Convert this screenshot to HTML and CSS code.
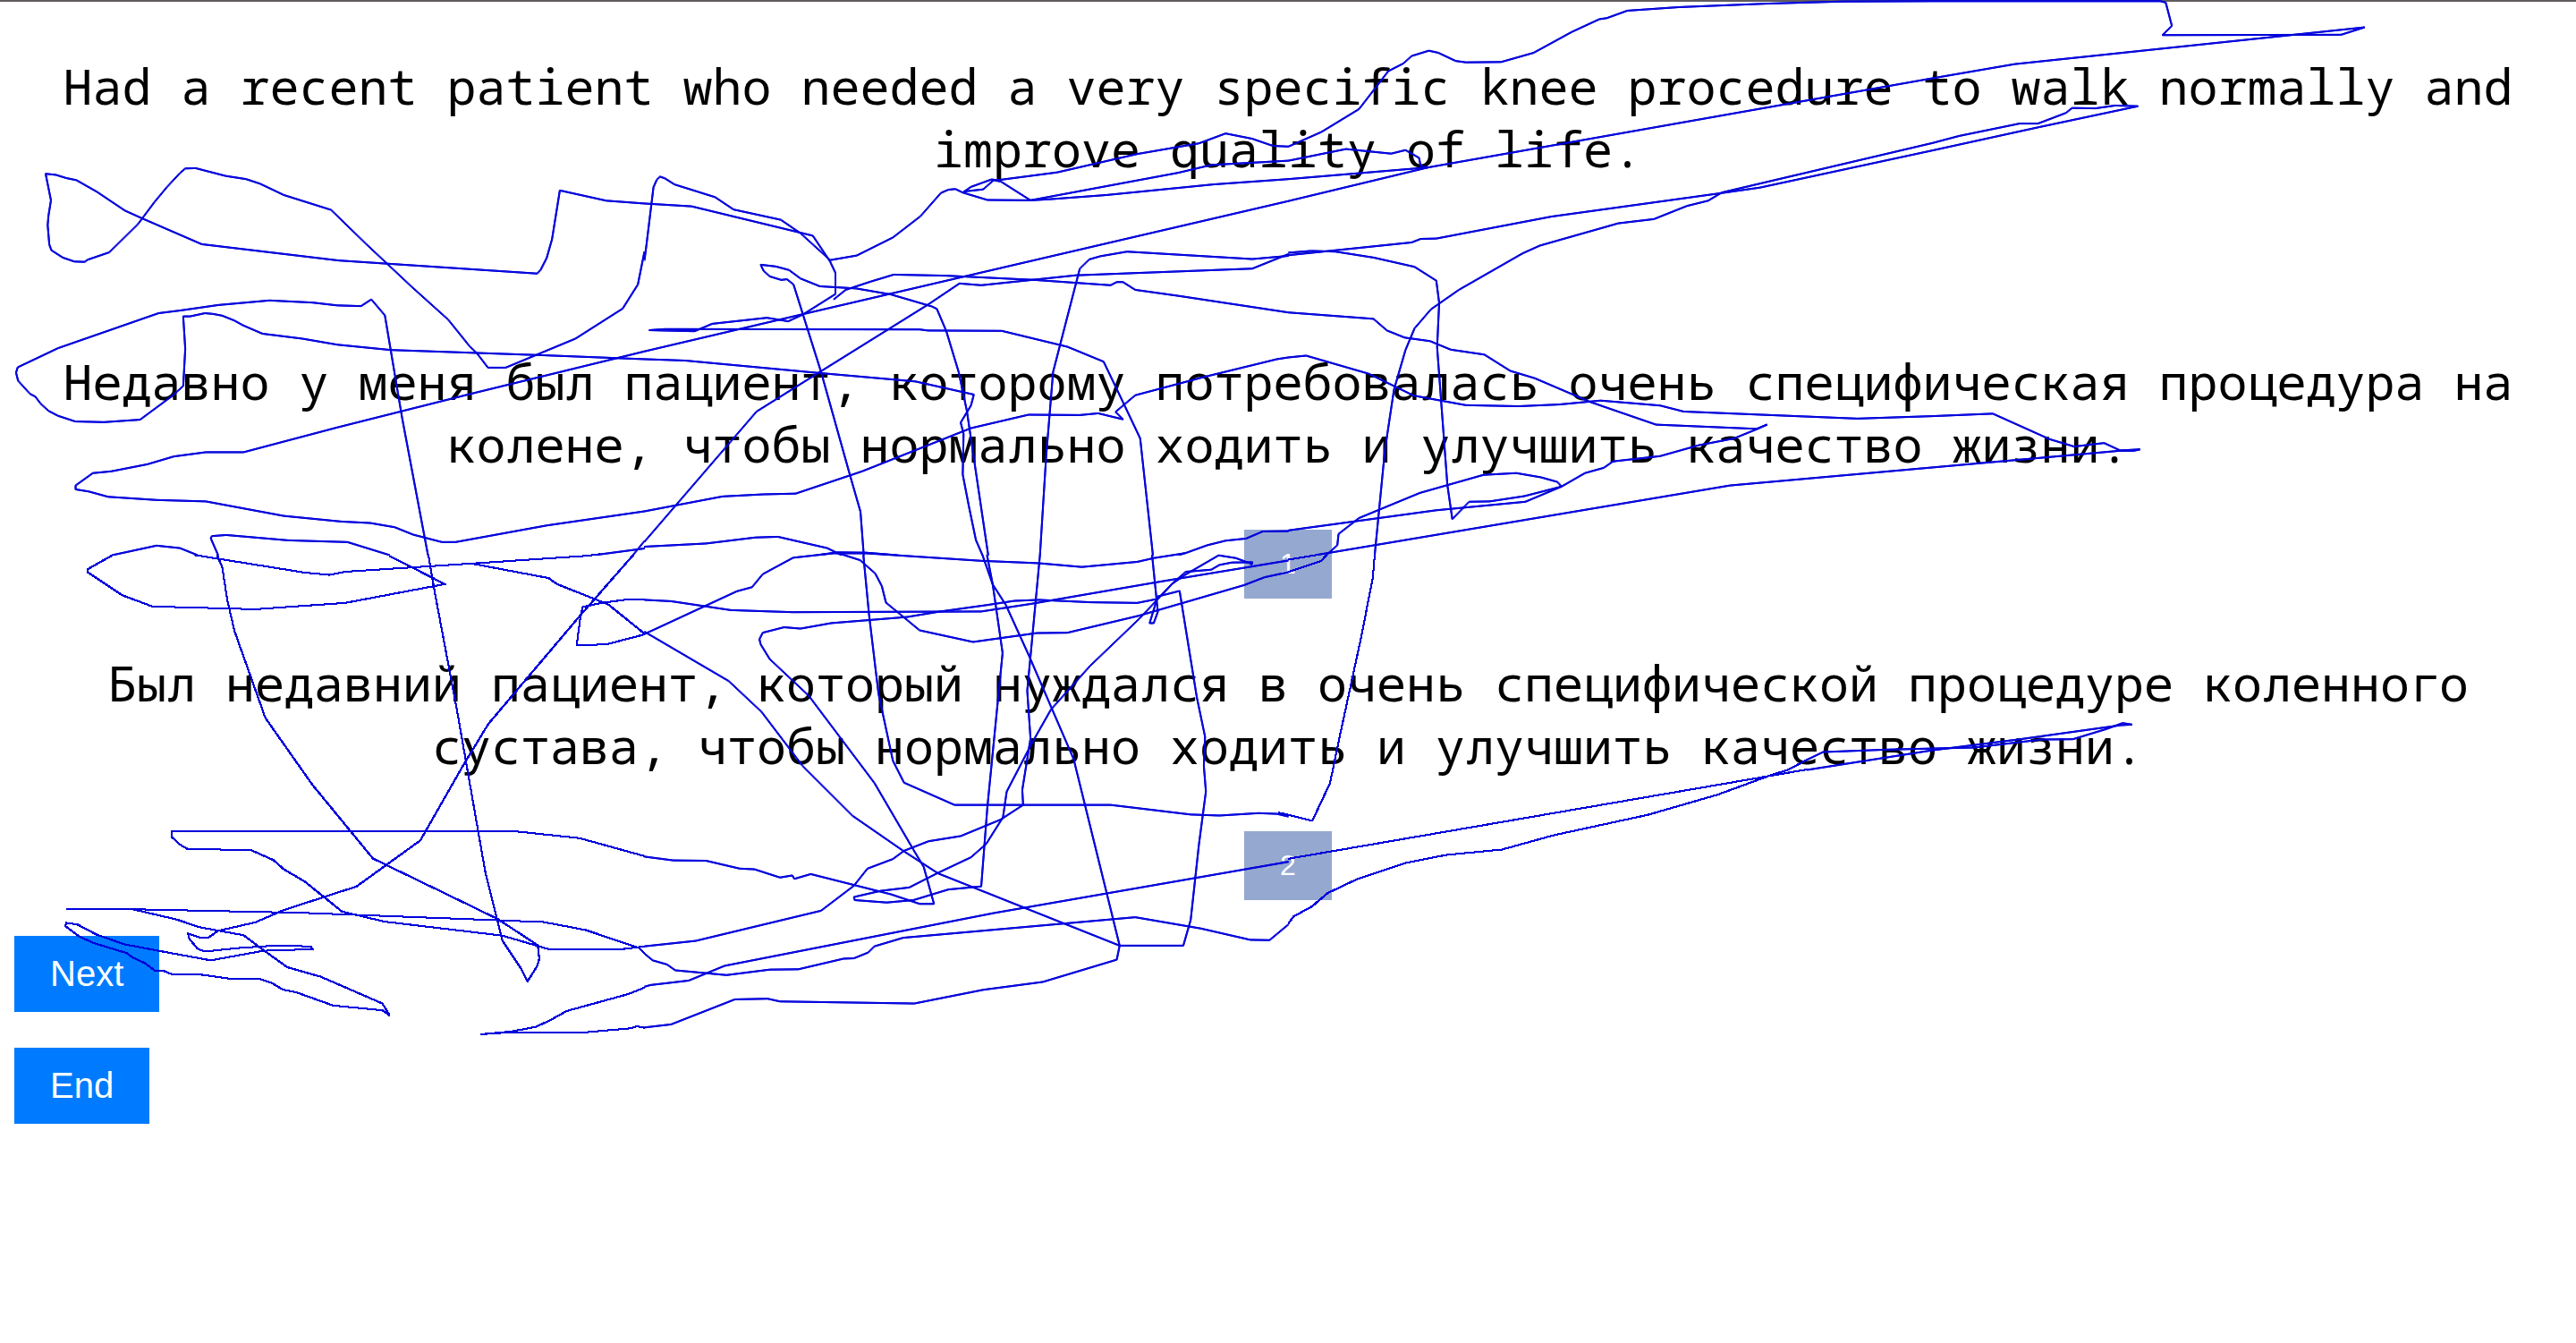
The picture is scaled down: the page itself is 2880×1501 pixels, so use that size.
FILE: index.html
```html
<!DOCTYPE html>
<html lang="ru">
<head>
<meta charset="utf-8">
<title>Translation choice</title>
<link rel="stylesheet" href="styles.css">
</head>
<body>
<main class="page">
  <p class="sentence" lang="en">Had a recent patient who needed a very specific knee procedure to walk normally and improve quality of life.</p>
  <section class="option">
    <p class="sentence">Недавно у меня был пациент, которому потребовалась очень специфическая процедура на колене, чтобы нормально ходить и улучшить качество жизни.</p>
    <button class="choice" type="button">1</button>
  </section>
  <section class="option">
    <p class="sentence">Был недавний пациент, который нуждался в очень специфической процедуре коленного сустава, чтобы нормально ходить и улучшить качество жизни.</p>
    <button class="choice" type="button">2</button>
  </section>
  <div class="actions">
    <button class="action" type="button">Next</button>
    <button class="action" type="button">End</button>
  </div>
</main>

<!-- Pointer trail, stored in tiles -->
<svg class="trail" width="2880" height="1501" viewBox="0 0 2880 1501" aria-hidden="true">
  <svg x="0" y="0" width="720" height="620" viewBox="0 0 1568 1568" preserveAspectRatio="none">
    <path d="M1568,574 1475,566 1362,537 1343,675 1330,728 1315,762 1307,772 1085,755 823,735 490,689 345,616 303,594 235,541 185,508 160,502 135,493 110,490 123,565 117,608 115,635 119,690 124,706 152,727 180,738 205,739 212,733 265,712 335,632 375,570 405,528 437,488 450,475 475,474 548,496 598,505 632,518 690,550 805,592 890,688 1000,808 1090,902 1142,977 1160,997 1187,1038 1230,1038 1400,956 1515,871 1552,803 1568,710"/>
    <path d="M1568,1014 1325,1003 950,988 820,973 735,956 638,942 590,918 570,905 540,891 517,886 498,884 462,893 445,893 450,985 445,1090 418,1118 340,1185 252,1192 182,1190 140,1174 117,1160 98,1140 85,1120 72,1112 43,1075 38,1052 42,1037 140,983 385,884 440,876 530,861 655,848 760,854 820,862 878,864 903,845 936,890 978,1180 1041,1568"/>
    <path d="M1568,992 1145,1112 820,1207 592,1277 500,1277 422,1289 358,1311 270,1331 225,1336 183,1371 183,1382 215,1388 262,1403 380,1412 500,1416 690,1457 830,1473 900,1477 960,1489 1005,1510 1075,1531 1108,1531 1330,1484 1568,1444"/>
    <path d="M272,1568 380,1541 437,1548 480,1568M530,1568 512,1520 515,1514 550,1511 700,1526 845,1531 948,1568M1568,1549 1445,1568M1568,1528 1540,1568"/>
  </svg>
  <svg x="720" y="0" width="720" height="620" viewBox="0 0 1568 1568" preserveAspectRatio="none">
    <path d="M0,735 5,690 22,528 30,507 38,498 50,503 73,520 172,556 217,591 332,620 380,658 452,734 517,721 605,670 672,610 722,544 740,535 757,533 775,543 835,564 940,565 985,562 1125,550 1385,520 1568,505"/>
    <path d="M0,574 115,582 410,665 452,738 465,770 465,830 387,887 350,907 335,904 298,897 165,914 122,935 12,932 50,929 670,930 690,933 870,934 1030,979 1118,1021 1165,1135 1207,1238 1238,1568"/>
    <path d="M461,845 490,818 550,795 607,775 735,778 950,790 1135,805 1150,796 1165,796 1195,818 1300,835 1568,882"/>
    <path d="M0,992 385,887 780,780 1568,567"/>
    <path d="M775,543 795,527 845,506 860,508 1005,486 1200,434 1350,404 1415,376 1480,391 1530,411 1568,413"/>
    <path d="M778,540 825,534 850,508 868,512 940,565 1300,487 1380,465 1568,453"/>
    <path d="M283,747 320,752 352,762 380,786 427,808 515,814 600,831 700,865 712,872 735,935 765,1050 785,1160 837,1568"/>
    <path d="M283,747 290,764 305,780 333,790 347,788 363,803 430,1050 500,1340 526,1445 534,1568"/>
    <path d="M0,1530 273,1162 430,1048 690,860 767,800 820,805 1050,777 1480,758 1568,717"/>
    <path d="M963,1568 978,1290 995,1050 1060,758 1083,732 1110,723 1175,710 1480,731 1568,722"/>
    <path d="M0,1014 100,1018 425,1053 660,1077 802,1114 795,1145 770,1193 777,1225 775,1340 790,1430 807,1525 823,1568"/>
    <path d="M0,1444 190,1402 290,1396 368,1394 530,1331 795,1209 935,1171 1060,1172 1105,1167 1165,1184 1147,1163 1195,1116 1360,1065 1540,1014 1568,1009"/>
    <path d="M0,1544 150,1535 270,1518 325,1516 445,1548 480,1568M420,1568 470,1560 540,1561 615,1568M1300,1568 1320,1561 1370,1540 1415,1527 1465,1521 1505,1501 1568,1500"/>
  </svg>
  <svg x="1440" y="0" width="720" height="620" viewBox="0 0 1568 1568" preserveAspectRatio="none">
    <path d="M0,413 80,372 172,307 243,200 280,178 300,157 342,142 365,148 407,171 432,175 518,174 597,148 690,89 757,53 775,50 825,29 950,19 1165,9 1350,3 1568,2"/>
    <path d="M0,453 140,420 250,433 285,423 318,445 322,468 340,472 0,505"/>
    <path d="M0,567 340,472 1568,220"/>
    <path d="M0,720 300,684 322,674 360,673 640,611 1045,546 1148,529 1568,424"/>
    <path d="M0,713 55,708 115,710 208,727 307,753 360,792 367,855 362,980 387,1370 399,1466 440,1417 490,1416 575,1401 665,1374 655,1361 615,1348 555,1336 475,1341 320,1392 172,1463 122,1508 119,1540 92,1568"/>
    <path d="M1568,403 1055,543 1022,566 970,581 890,618 803,630 612,693 570,715 415,818 347,873 307,927 285,988 257,1100 235,1270 210,1568"/>
    <path d="M0,882 207,900 240,933 283,953 345,963 395,987 477,1001 540,1047 600,1068 735,1135 895,1199 1140,1211 1165,1199 1140,1212 1085,1238 1000,1257 905,1288 790,1303 768,1321 722,1336 665,1374 577,1417 360,1441 0,1498"/>
    <path d="M0,1009 43,1004 195,1055 305,1117 432,1144 560,1147 660,1142 760,1131 905,1145 962,1162 1385,1182 1568,1175"/>
    <path d="M1568,1320 1075,1371 65,1568"/>
  </svg>
  <svg x="2160" y="0" width="720" height="620" viewBox="0 0 1568 1568" preserveAspectRatio="none">
    <path d="M0,2 555,2 568,6 583,72 560,98 995,97 1052,76 880,97 200,180 0,220"/>
    <path d="M0,403 65,383 212,348 257,348 325,318 340,304 397,305 445,297 500,299 260,358 0,424"/>
    <path d="M0,1175 147,1168 285,1240 345,1261 418,1251 457,1272 505,1269 490,1273 455,1273 0,1320"/>
  </svg>
  <svg x="0" y="580" width="720" height="700" viewBox="0 0 1568 1568" preserveAspectRatio="none">
    <path d="M272,90 212,125 212,132 297,190 370,218 620,225 840,209 1082,162 948,92M472,89 740,133 800,139 840,131 1155,110 1430,91 1460,87M1155,112 1335,147 1355,162 1480,213 1568,286"/>
    <path d="M528,90 540,120 552,200 570,280 645,497 760,665 907,849 1210,1000 1308,1066 1312,1100 1306,1120 1283,1157 1268,1125 1222,1054 1180,880 1112,480 1057,180 1042,90"/>
    <path d="M1540,90 1412,240 1188,512 1130,610 1022,804 867,919 690,978 620,1009 530,1030 505,1048 490,1048 457,1037 460,1050 480,1075 497,1082 580,1073 670,1067 755,1069 760,1076 640,1080 512,1104 385,1080 303,1064 235,1040 187,1014 160,1010 158,1018 190,1043 225,1060 308,1086 322,1097 350,1110 375,1129 397,1130 420,1140 490,1140 560,1150 632,1151 660,1160 687,1177 720,1184 810,1217 930,1229 948,1242 930,1212 780,1145 698,1121 640,1078 592,1041 485,1021 430,1002 322,976 162,975"/>
    <path d="M322,976 735,985 1170,1002 1322,1008 1425,1028 1555,1073 1568,1086"/>
    <path d="M1568,843 1410,798 1245,780 418,780 418,796 437,814 455,825 610,828 665,853 690,876 740,906 832,982 935,1007 1222,1042 1335,1076 1505,1077 1568,1069"/>
    <path d="M1568,1172 1530,1188 1378,1231 1342,1252 1305,1270 1245,1282 1170,1289 1245,1284 1425,1284 1535,1274 1550,1269 1568,1273"/>
    <path d="M1568,200 1522,201 1465,209 1418,219 1412,245 1403,315 1475,313 1568,288"/>
  </svg>
  <svg x="720" y="580" width="720" height="600" viewBox="0 0 1568 1568" preserveAspectRatio="none">
    <path d="M470,98 525,119 562,158 578,195 588,243 670,324 800,358 955,332 1030,331 1205,281 1460,192 1510,169 1568,154"/>
    <path d="M0,335 225,210 262,198 288,160 362,112 460,99 540,99 820,121 960,128 1065,139 1200,124 1240,113 1315,99"/>
    <path d="M0,235 65,239 210,265 360,271 820,269 940,247 1250,183 1568,120"/>
    <path d="M1478,130 1440,113 1398,105 1315,163 1285,188 1205,290 1085,428 990,555 945,650 882,795 873,870 832,948 795,987 712,1034 645,1075 575,1085 510,1103 512,1112 590,1119 655,1112 740,1081 820,1072 835,840 872,390 848,190 834,104"/>
    <path d="M823,104 848,190 880,250 937,400 1045,700 1157,1245 1150,1286 970,1351 825,1374 657,1414 330,1408 300,1400 220,1402 65,1475 0,1484"/>
    <path d="M533,104 547,280 570,510 605,705 632,769 755,834 1135,834 1330,862 1400,865 1495,858 1540,860 1568,868"/>
    <path d="M963,104 940,400 932,500 940,640 920,790 922,834 867,877 770,925 692,940 632,968 605,992 543,1020 510,1070 430,1143 125,1231 0,1247"/>
    <path d="M1236,104 1250,270 1240,303 1230,303 1250,225 1303,209 1345,520 1365,635 1362,720 1367,795 1350,950 1330,1170 1312,1245 1157,1245 715,1034 630,968 507,866 385,720 285,562 205,472 0,328"/>
    <path d="M1478,133 1480,125 1430,126 1400,133 1380,147 1318,153 1285,188 1250,232 1200,244 1085,242 960,235 900,238 835,250 715,270 640,285 455,303 380,319 340,315 288,331 280,350 283,365 305,408 400,515 560,770 655,965 680,1015 705,1123 670,1123 600,1095 405,1036 365,1050 360,1040 330,1046 268,1022 232,1020 150,997 70,996 0,985"/>
    <path d="M0,1268 20,1288 55,1300 75,1317 200,1331 305,1315 375,1314 485,1283 510,1282 545,1265 560,1247 630,1222 1195,1162 1355,1195 1475,1228 1522,1229 1568,1183"/>
    <path d="M0,1365 15,1360 108,1347 195,1304 850,1150 1568,1000"/>
  </svg>
  <svg x="1300" y="560" width="720" height="520" viewBox="0 0 1568 1568" preserveAspectRatio="none">
    <path d="M397,181 385,200 305,237M370,181 305,196M515,181 510,260 480,470 430,790 406,950 363,1076 280,1048M305,1204 1455,930 1568,903"/>
    <path d="M305,1422 318,1398 362,1365 400,1320 470,1274 590,1218 690,1191 825,1173 950,1125 1180,1056 1350,988 1480,922 1520,905 1568,870"/>
  </svg>
  <svg x="1900" y="700" width="600" height="300" viewBox="0 0 1568 900" preserveAspectRatio="none">
    <path d="M313,446 360,420 545,412 800,405 1000,378 1090,377 1190,342 1235,323 1262,328 1230,330 930,378 680,414 313,480"/>
  </svg>
</svg>
</body>
</html>
```

FILE: styles.css
```css
* {
  box-sizing: border-box;
}

body {
  margin: 0;
  background: #fff;
  color: #000;
  font-family: "Liberation Sans", Arial, sans-serif;
}

.page {
  min-height: 100vh;
  padding: 59px 16px 40px;
  border-top: 2px solid #5f5b5f;
}

.sentence {
  margin: 0;
  font-family: Consolas, "Noto Sans Mono", "DejaVu Sans Mono", "Liberation Mono", monospace;
  font-size: 55px;
  line-height: 70px;
  text-align: center;
}

.option {
  display: flex;
  flex-direction: column;
  align-items: center;
  gap: 61px;
  padding-top: 190px;
}

.option + .option {
  padding-top: 59px;
}

.choice,
.action {
  border: 0;
  font-family: inherit;
  color: #fff;
  cursor: pointer;
}

.choice {
  padding: 20px 40px;
  background: #94a8d0;
  font-size: 32px;
  line-height: 37px;
}

.actions {
  display: flex;
  flex-direction: column;
  align-items: flex-start;
  gap: 40px;
  padding-top: 40px;
}

.action {
  padding: 20px 40px;
  background: #007bff;
  font-size: 40px;
  line-height: 45px;
}

/* The two hard shadows widen each one-pixel line into a square-brush stroke */
.trail {
  position: absolute;
  top: 0;
  left: 0;
  pointer-events: none;
  filter: drop-shadow(1px 0 0 #0000dc) drop-shadow(0 1px 0 #0000dc);
}

.trail path {
  fill: none;
  stroke: #0000dc;
  stroke-width: 1px;
  vector-effect: non-scaling-stroke;
  shape-rendering: crispEdges;
}
```
